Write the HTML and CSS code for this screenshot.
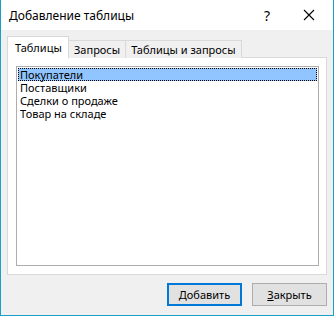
FILE: index.html
```html
<!DOCTYPE html>
<html lang="ru">
<head>
    <meta charset="UTF-8">
    <title>Добавление таблицы</title>
    <link rel="stylesheet" href="styles.css">
</head>
<body>
    <div class="window">
        <div class="titlebar">
            <span class="title">Добавление таблицы</span>
            <span class="help">?</span>
            <span class="close">
                <svg width="12" height="12" viewBox="0 0 12 12"><path d="M1 1 L11 11 M11 1 L1 11" stroke="#000" stroke-width="1.1" fill="none"/></svg>
            </span>
        </div>
        <div class="content">
            <div class="tabs">
                <div class="tab active">Таблицы</div>
                <div class="tab">Запросы</div>
                <div class="tab">Таблицы и запросы</div>
            </div>
            <div class="panel">
                <ul class="listbox">
                    <li class="selected">Покупатели</li>
                    <li>Поставщики</li>
                    <li>Сделки о продаже</li>
                    <li>Товар на складе</li>
                </ul>
            </div>
            <div class="buttons">
                <button class="btn default"><u>Д</u>обавить</button>
                <button class="btn"><u>З</u>акрыть</button>
            </div>
        </div>
    </div>
</body>
</html>
```

FILE: styles.css
```css
body { margin: 0; font-family: "Noto Sans", "Open Sans", sans-serif; font-size: 11px; color: #000; }
.window { width: 332px; height: 315px; border: 1px solid #1a9fcb; border-top: none; background: #f0f0f0; display: flex; flex-direction: column; }
.titlebar { height: 30px; background: #fff; display: flex; align-items: center; }
.title { padding-left: 8px; flex: 1; font-size: 12px; }
.help { width: 18px; font-size: 14px; margin-right: 27px; text-align: center; }
.close { width: 12px; height: 12px; margin-right: 18px; display: flex; }
.content { flex: 1; padding: 7px 6px 0 6px; display: flex; flex-direction: column; }
.tabs { display: flex; align-items: flex-end; height: 21px; margin-bottom: -1px; position: relative; z-index: 1; }
.tab { height: 18px; line-height: 17px; padding: 0 5px; border: 1px solid #d9d9d9; border-bottom: none; border-left: none; background: #f0f0f0; box-sizing: border-box; }
.tab.active { height: 22px; line-height: 22px; padding: 0 7px; border-left: 1px solid #d9d9d9; background: #fff; width: 62px; }
.panel { height: 218px; box-sizing: border-box; border: 1px solid #d9d9d9; background: #fff; padding: 8px 7px 8px 8px; }
.listbox { margin: 0; padding: 1px; list-style: none; height: 100%; box-sizing: border-box; border: 1px solid #adadad; }
.listbox li { height: 13px; line-height: 13px; padding-left: 2px; box-sizing: border-box; }
.listbox li.selected { background: #91c5ff; outline: 1px dotted #000; outline-offset: -1px; }
.buttons { display: flex; justify-content: flex-end; gap: 10px; margin-top: 8px; padding-right: 0; }
.btn { width: 75px; height: 23px; font: inherit; background: #e1e1e1; border: 1px solid #adadad; padding: 0; color: #000; }
.btn.default { border: 2px solid #0078d7; }
```
